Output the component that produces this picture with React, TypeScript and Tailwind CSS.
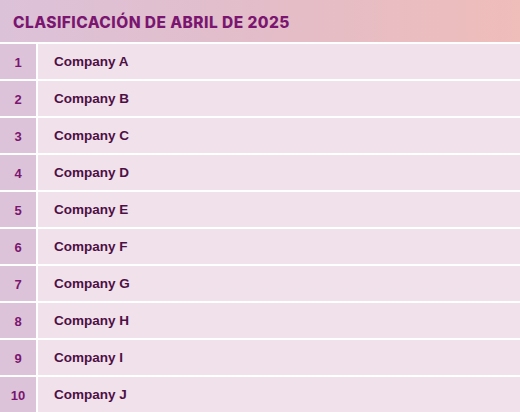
const companies = [
  'Company A',
  'Company B',
  'Company C',
  'Company D',
  'Company E',
  'Company F',
  'Company G',
  'Company H',
  'Company I',
  'Company J',
];

export default function App() {
  return (
    <div className="w-[520px] h-[412px] bg-white overflow-hidden flex flex-col gap-[2px]">
      <div className="h-[42px] flex items-center px-[13px] pt-[3px] bg-gradient-to-r from-[#dcc2d9] via-[#e3bdc9] to-[#efbdba]">
        <h1
          className="text-[15.5px] font-extrabold text-[#7b1670] tracking-[0.45px]"
          style={{ fontFamily: 'Inter, "Open Sans", sans-serif' }}
        >
          CLASIFICACIÓN DE ABRIL DE 2025
        </h1>
      </div>
      {companies.map((name, i) => (
        <div key={name} className="h-[35px] flex gap-[2px] shrink-0">
          <div
            className="w-[36px] flex items-center justify-center pt-[2px] bg-[#dcc3d9] text-[13px] font-bold text-[#7b1670]"
            style={{ fontFamily: '"Liberation Sans", Arial, sans-serif' }}
          >
            {i + 1}
          </div>
          <div
            className="flex-1 flex items-center pl-[16px] pt-[2px] bg-[#f1e1eb] text-[13.5px] font-bold text-[#4d1045]"
            style={{ fontFamily: '"Liberation Sans", Arial, sans-serif' }}
          >
            {name}
          </div>
        </div>
      ))}
    </div>
  );
}
